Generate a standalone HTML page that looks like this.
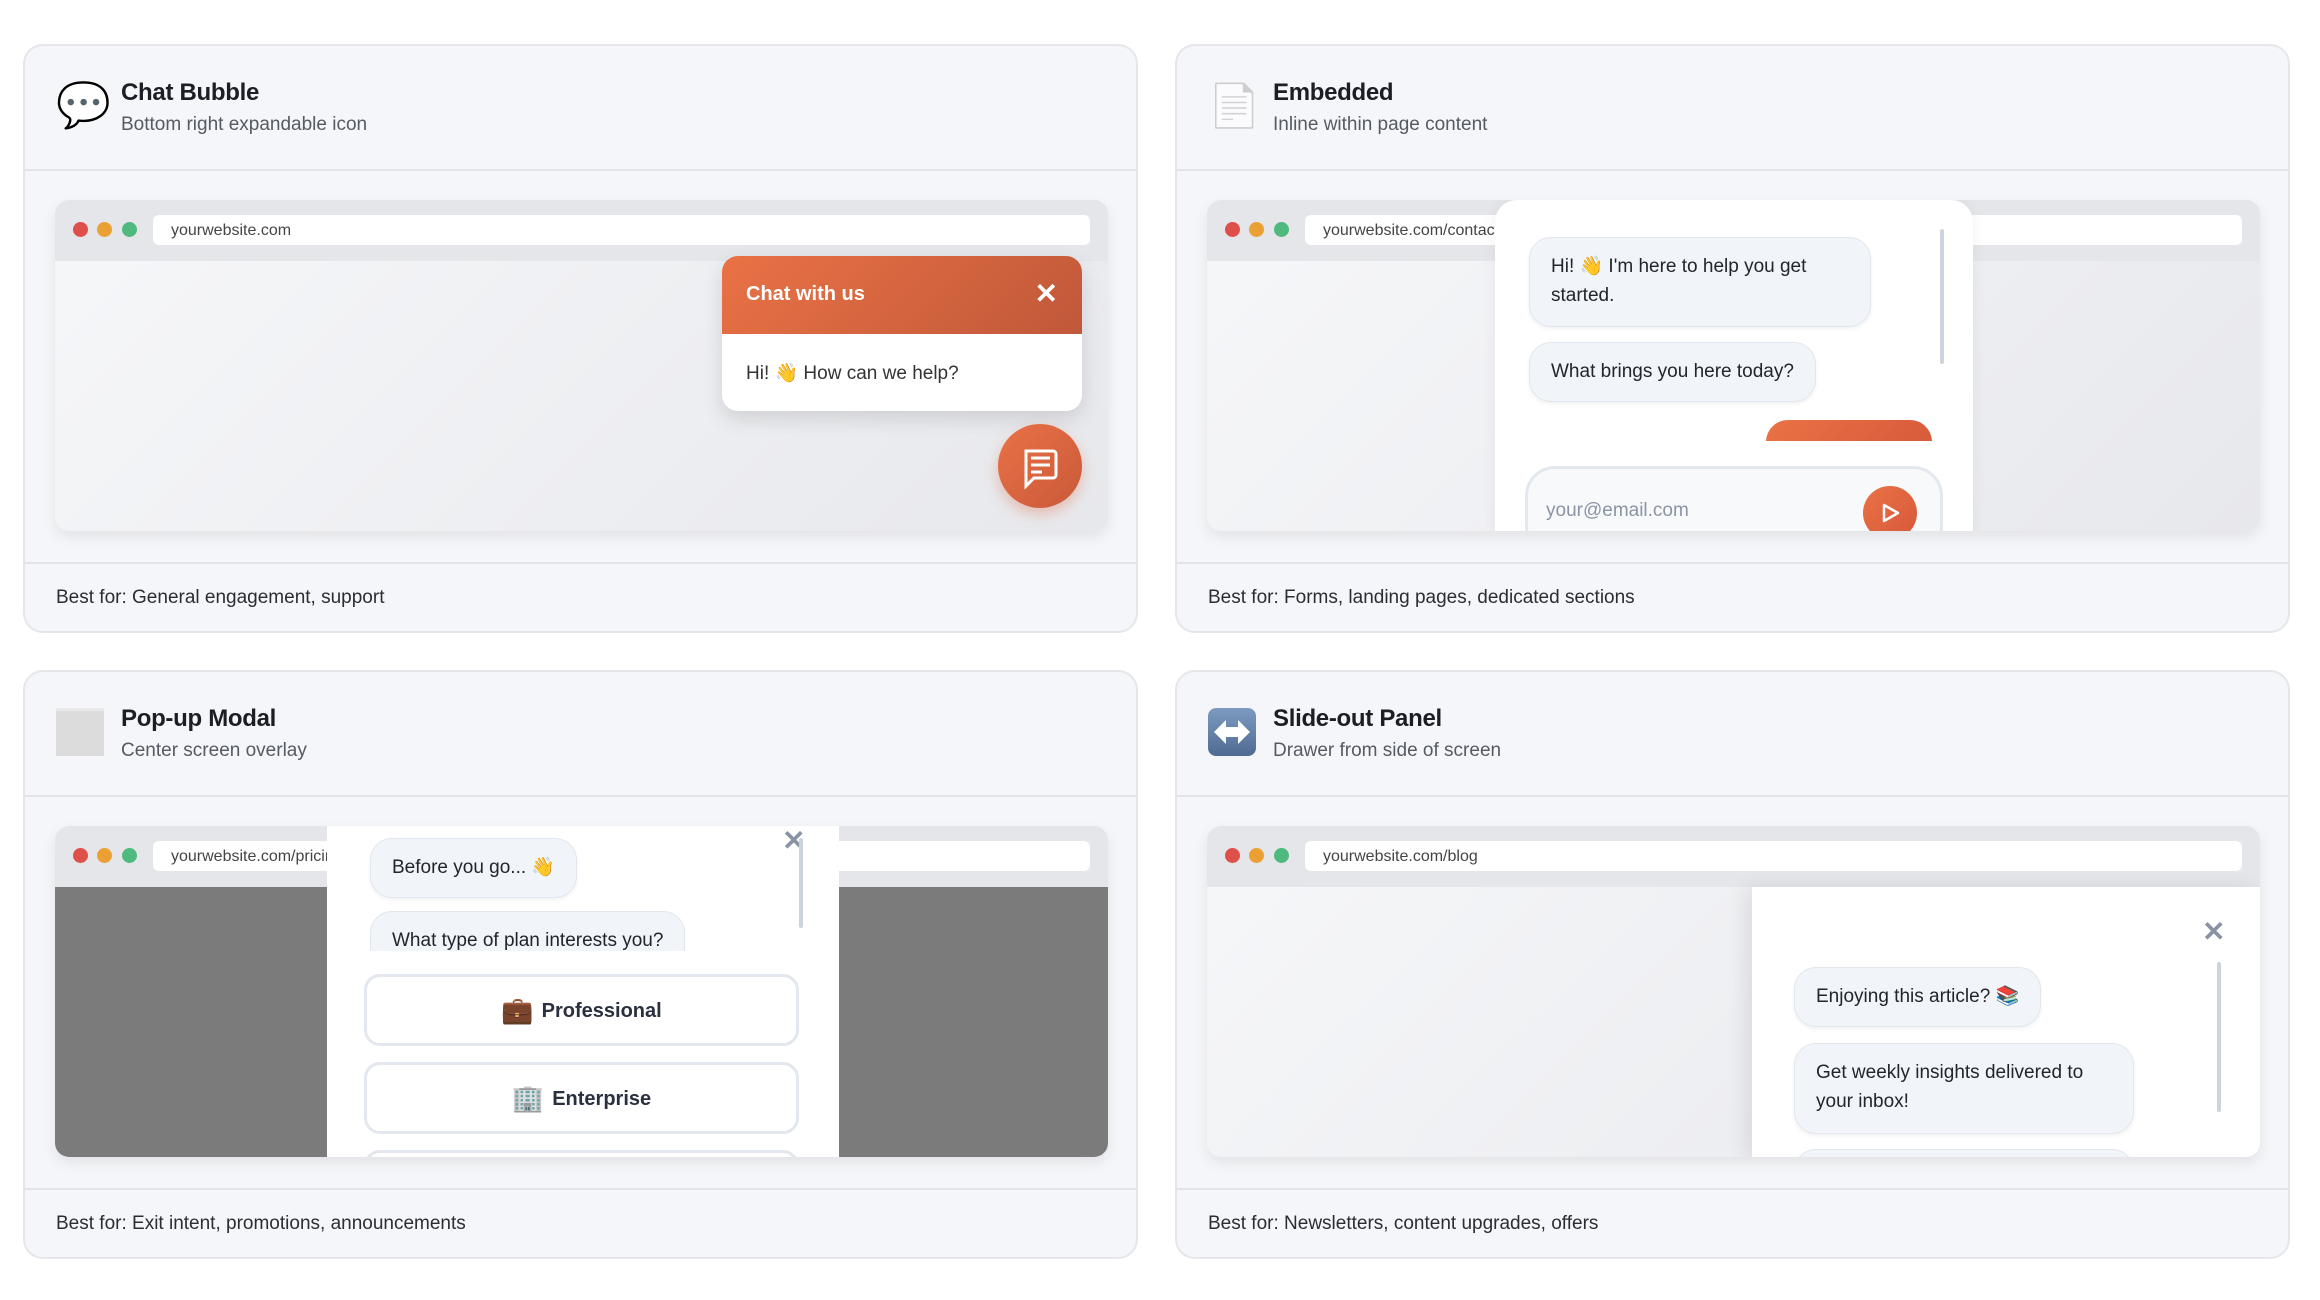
<!DOCTYPE html>
<html><head><meta charset="utf-8"><style>
*{box-sizing:border-box;margin:0;padding:0}
body{width:2320px;height:1300px;background:#fff;font-family:"Liberation Sans","Noto Sans CJK JP",sans-serif;position:relative;overflow:hidden;color:#1f2430}
.card{position:absolute;width:1115px;height:589px;background:#f5f6f9;border:2px solid #e4e6ea;border-radius:20px;overflow:hidden}
.hd{position:absolute;left:0;top:0;right:0;height:125px;border-bottom:2px solid #e2e4e8}
.ic{position:absolute;left:31px;top:36px;width:48px;height:48px}
.t{position:absolute;left:96px;top:33px;font-size:24px;font-weight:bold;color:#1b1e25;letter-spacing:-0.3px}
.s{position:absolute;left:96px;top:68px;font-size:19px;color:#555a63}
.ft{position:absolute;left:0;right:0;top:516px;bottom:0;border-top:2px solid #e2e4e8}
.ft span{position:absolute;left:31px;top:23px;font-size:19px;color:#2a2d33}
.br{position:absolute;left:30px;top:154px;width:1053px;height:331px;border-radius:14px;overflow:hidden;background:linear-gradient(135deg,#f6f7f9,#e7e8ec);box-shadow:0 6px 14px rgba(0,0,0,.08)}
.bar{position:absolute;left:0;top:0;right:0;height:61px;background:#e5e6ea}
.d{position:absolute;top:22px;width:15px;height:15px;border-radius:50%}
.url{position:absolute;left:98px;top:15px;right:18px;height:30px;background:#fff;border-radius:6px;font-size:16px;color:#444;padding:7px 18px;white-space:nowrap;overflow:hidden}
.bub{position:absolute;background:#f1f4f8;border:1.5px solid #e2e7ee;border-radius:22px;font-size:19px;color:#22252b;padding:0 21px;line-height:29px;box-shadow:0 2px 4px rgba(0,0,0,.06)}
.x{position:absolute;font-size:28px;color:#8a93a3;font-weight:bold}
.sc{position:absolute;width:4px;border-radius:2px;background:#cdd3dc}
.opt{position:absolute;left:37px;width:435px;height:72px;background:#fff;border:3px solid #e3e7ee;border-radius:16px;font-size:20px;font-weight:bold;color:#2a3040;text-align:center;line-height:66px}
.opt i{font-style:normal;font-size:26px;vertical-align:-2px;margin-right:8px}
</style></head><body>

<!-- Card 1 -->
<div class="card" style="left:23px;top:44px">
 <div class="hd">
  <div class="ic" style="font-size:44px;line-height:48px">💬</div>
  <div class="t">Chat Bubble</div><div class="s">Bottom right expandable icon</div>
 </div>
 <div class="br">
  <div class="bar"><div class="d" style="left:18px;background:#e0504a"></div><div class="d" style="left:42px;background:#eba034"></div><div class="d" style="left:67px;background:#50b97e"></div><div class="url">yourwebsite.com</div></div>
  <div style="position:absolute;left:667px;top:56px;width:360px;height:155px;border-radius:16px;background:#fff;overflow:hidden;box-shadow:0 8px 20px rgba(0,0,0,.12)">
   <div style="height:78px;background:linear-gradient(135deg,#ea7245,#c0583a);color:#fff;font-size:20px;font-weight:bold;padding:27px 24px">Chat with us<span style="position:absolute;right:24px;top:21px;font-size:28px">✕</span></div>
   <div style="padding:27px 24px;font-size:19px;color:#333">Hi! 👋 How can we help?</div>
  </div>
  <div style="position:absolute;left:943px;top:224px;width:84px;height:84px;border-radius:50%;background:linear-gradient(135deg,#ea7245,#c9593a);box-shadow:0 6px 14px rgba(220,100,60,.35)">
   <svg width="84" height="84" viewBox="0 0 84 84"><path d="M28 27h27a3 3 0 0 1 3 3v21a3 3 0 0 1-3 3H36l-8 8z" fill="none" stroke="#fff" stroke-width="3"/><path d="M33 34h19M33 41h19M33 48h11" stroke="#fff" stroke-width="3"/></svg>
  </div>
 </div>
 <div class="ft"><span>Best for: General engagement, support</span></div>
</div>

<!-- Card 2 -->
<div class="card" style="left:1175px;top:44px">
 <div class="hd">
  <div class="ic" style="font-size:42px;line-height:48px;filter:grayscale(1);opacity:.6">📄</div>
  <div class="t">Embedded</div><div class="s">Inline within page content</div>
 </div>
 <div class="br">
  <div class="bar"><div class="d" style="left:18px;background:#e0504a"></div><div class="d" style="left:42px;background:#eba034"></div><div class="d" style="left:67px;background:#50b97e"></div><div class="url">yourwebsite.com/contact</div></div>
  <div style="position:absolute;left:288px;top:0;width:478px;height:340px;background:#fff;border-radius:22px 22px 0 0;box-shadow:0 0 16px rgba(0,0,0,.06);overflow:hidden">
   <div class="bub" style="left:34px;top:37px;width:342px;padding-top:14px;height:90px">Hi! 👋 I'm here to help you get started.</div>
   <div class="bub" style="left:34px;top:142px;height:60px;padding-top:14px">What brings you here today?</div>
   <div style="position:absolute;left:271px;top:220px;width:166px;height:40px;border-radius:22px 22px 0 0;background:linear-gradient(135deg,#ea7245,#d6583a);clip-path:inset(0 0 19px 0)"></div>
   <div class="sc" style="left:445px;top:29px;height:135px"></div>
   <div style="position:absolute;left:30px;top:266px;width:418px;height:90px;border:3px solid #e3e7ee;border-radius:30px;background:#f8f9fb">
    <span style="position:absolute;left:18px;top:31px;font-size:19px;color:#8b93a5">your@email.com</span>
    <div style="position:absolute;left:335px;top:17px;width:54px;height:54px;border-radius:50%;background:linear-gradient(135deg,#ea7245,#d6583a)"><svg width="54" height="54"><path d="M21 19l14 8-14 8z" fill="none" stroke="#fff" stroke-width="2.5" stroke-linejoin="round"/></svg></div>
   </div>
  </div>
 </div>
 <div class="ft"><span>Best for: Forms, landing pages, dedicated sections</span></div>
</div>

<!-- Card 3 -->
<div class="card" style="left:23px;top:670px">
 <div class="hd">
  <div class="ic" style="background:#dcdcdc;border-top:3px solid #e8e8e8"></div>
  <div class="t">Pop-up Modal</div><div class="s">Center screen overlay</div>
 </div>
 <div class="br">
  <div class="bar"><div class="d" style="left:18px;background:#e0504a"></div><div class="d" style="left:42px;background:#eba034"></div><div class="d" style="left:67px;background:#50b97e"></div><div class="url">yourwebsite.com/pricing</div></div>
  <div style="position:absolute;left:0;right:0;top:61px;bottom:0;background:#7b7b7b"></div>
  <div style="position:absolute;left:272px;top:0;width:512px;height:332px;background:#fff;overflow:hidden">
   <div class="bub" style="left:43px;top:12px;height:60px;padding-top:14px">Before you go... 👋</div>
   <div class="bub" style="left:43px;top:85px;height:60px;padding-top:14px;clip-path:inset(0 0 20px 0)">What type of plan interests you?</div>
   <div class="x" style="left:455px;top:-2px">✕</div>
   <div class="sc" style="left:472px;top:12px;height:90px"></div>
   <div class="opt" style="top:148px"><i>💼</i>Professional</div>
   <div class="opt" style="top:236px"><i>🏢</i>Enterprise</div>
   <div class="opt" style="top:324px"></div>
  </div>
 </div>
 <div class="ft"><span>Best for: Exit intent, promotions, announcements</span></div>
</div>

<!-- Card 4 -->
<div class="card" style="left:1175px;top:670px">
 <div class="hd">
  <div class="ic" style="border-radius:8px;background:linear-gradient(#7d9ac0,#4f6b92)"><svg width="48" height="48"><path d="M6 24l12-12v7h12v-7l12 12-12 12v-7H18v7z" fill="#fff"/></svg></div>
  <div class="t">Slide-out Panel</div><div class="s">Drawer from side of screen</div>
 </div>
 <div class="br">
  <div class="bar"><div class="d" style="left:18px;background:#e0504a"></div><div class="d" style="left:42px;background:#eba034"></div><div class="d" style="left:67px;background:#50b97e"></div><div class="url">yourwebsite.com/blog</div></div>
  <div style="position:absolute;left:545px;top:61px;right:0;bottom:0;background:#fff;box-shadow:-8px 0 18px rgba(0,0,0,.08)">
   <div class="x" style="left:450px;top:28px">✕</div>
   <div class="sc" style="left:465px;top:75px;height:150px"></div>
   <div class="bub" style="left:42px;top:80px;height:60px;padding-top:14px">Enjoying this article? 📚</div>
   <div class="bub" style="left:42px;top:156px;width:340px;height:91px;padding-top:14px">Get weekly insights delivered to your inbox!</div>
   <div class="bub" style="left:42px;top:262px;width:340px;height:60px"></div>
  </div>
 </div>
 <div class="ft"><span>Best for: Newsletters, content upgrades, offers</span></div>
</div>
</body></html>
